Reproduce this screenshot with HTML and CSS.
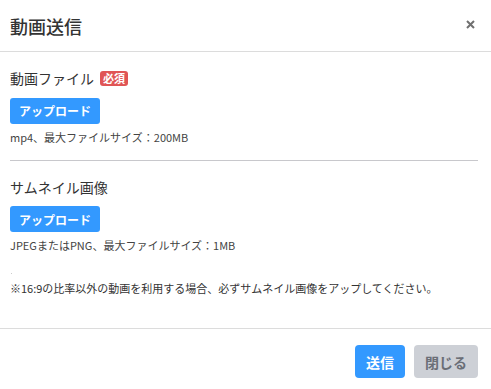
FILE: index.html
```html
<!DOCTYPE html>
<html lang="ja">
<head>
    <meta charset="UTF-8">
    <meta name="viewport" content="width=device-width, initial-scale=1.0">
    <title>動画送信</title>
    <link rel="stylesheet" href="styles.css">
</head>
<body>
    <div class="modal">
        <div class="modal-header">
            <h2 class="modal-title">動画送信</h2>
            <button class="close-btn" type="button" aria-label="閉じる">
                <svg width="9" height="9" viewBox="0 0 9 9"><path d="M1 1L8 8M8 1L1 8" stroke="#707070" stroke-width="2"/></svg>
            </button>
        </div>
        <div class="modal-body">
            <div class="upload-group">
                <div class="group-label">動画ファイル <span class="badge">必須</span></div>
                <button type="button" class="upload-btn">アップロード</button>
                <p class="hint">mp4、最大ファイルサイズ：200MB</p>
            </div>
            <hr class="divider">
            <div class="upload-group">
                <div class="group-label">サムネイル画像</div>
                <button type="button" class="upload-btn">アップロード</button>
                <p class="hint">JPEGまたはPNG、最大ファイルサイズ：1MB</p>
            </div>
            <span class="preview"></span>
            <p class="note">※16:9の比率以外の動画を利用する場合、必ずサムネイル画像をアップしてください。</p>
        </div>
        <div class="modal-footer">
            <button type="button" class="btn btn-primary">送信</button>
            <button type="button" class="btn btn-secondary">閉じる</button>
        </div>
    </div>
</body>
</html>
```
FILE: styles.css
```css
* { margin: 0; padding: 0; box-sizing: border-box; }
body {
    font-family: "Noto Sans CJK JP", "Noto Sans", sans-serif;
    background: #fff;
    color: #333;
}
.modal {
    width: 491px;
    height: 389px;
    display: flex;
    flex-direction: column;
}
.modal-header {
    height: 52px;
    padding: 0 16px 0 10px;
    display: flex;
    justify-content: space-between;
    align-items: center;
    border-bottom: 1px solid #dcdcdc;
}
.modal-title {
    font-size: 18px;
    font-weight: 500;
    line-height: 24px;
    color: #333;
}
.close-btn {
    border: none;
    background: none;
    display: flex;
    margin-top: -2px;
    cursor: pointer;
}
.modal-body {
    flex: 1;
    padding: 16px 13px 0 10px;
}
.group-label {
    font-size: 14px;
    line-height: 20px;
    margin-bottom: 9px;
    display: flex;
    align-items: center;
}
.badge {
    display: inline-block;
    margin-left: 6px;
    padding: 0 3px;
    height: 15px;
    line-height: 15px;
    font-size: 11px;
    font-weight: bold;
    color: #fff;
    background: #e05555;
    border-radius: 3px;
}
.upload-btn {
    height: 26px;
    padding: 0 9px;
    font-family: inherit;
    font-size: 12px;
    font-weight: bold;
    color: #fff;
    background: #3399ff;
    border: none;
    border-radius: 3px;
    cursor: pointer;
}
.hint {
    margin-top: 5px;
    font-size: 11px;
    line-height: 16px;
    color: #444;
}
.divider {
    border: none;
    border-top: 1px solid #c8c8cc;
    margin: 15px 0 16px;
}
.preview {
    display: block;
    width: 1px;
    height: 1px;
    margin: 20px 0 0 1px;
    background: #ccc;
}
.note {
    margin-top: 6px;
    font-size: 11px;
    line-height: 16px;
    color: #333;
}
.modal-footer {
    height: 61px;
    border-top: 1px solid #dcdcdc;
    padding: 16px 13px 0 0;
    display: flex;
    justify-content: flex-end;
    align-items: flex-start;
    gap: 9px;
}
.btn {
    height: 33px;
    padding: 0 11px;
    font-family: inherit;
    font-size: 14px;
    font-weight: bold;
    border: none;
    border-radius: 4px;
    cursor: pointer;
}
.btn-primary {
    background: #3399ff;
    color: #fff;
}
.btn-secondary {
    background: #cdd0d6;
    color: #6a6e76;
}
```
